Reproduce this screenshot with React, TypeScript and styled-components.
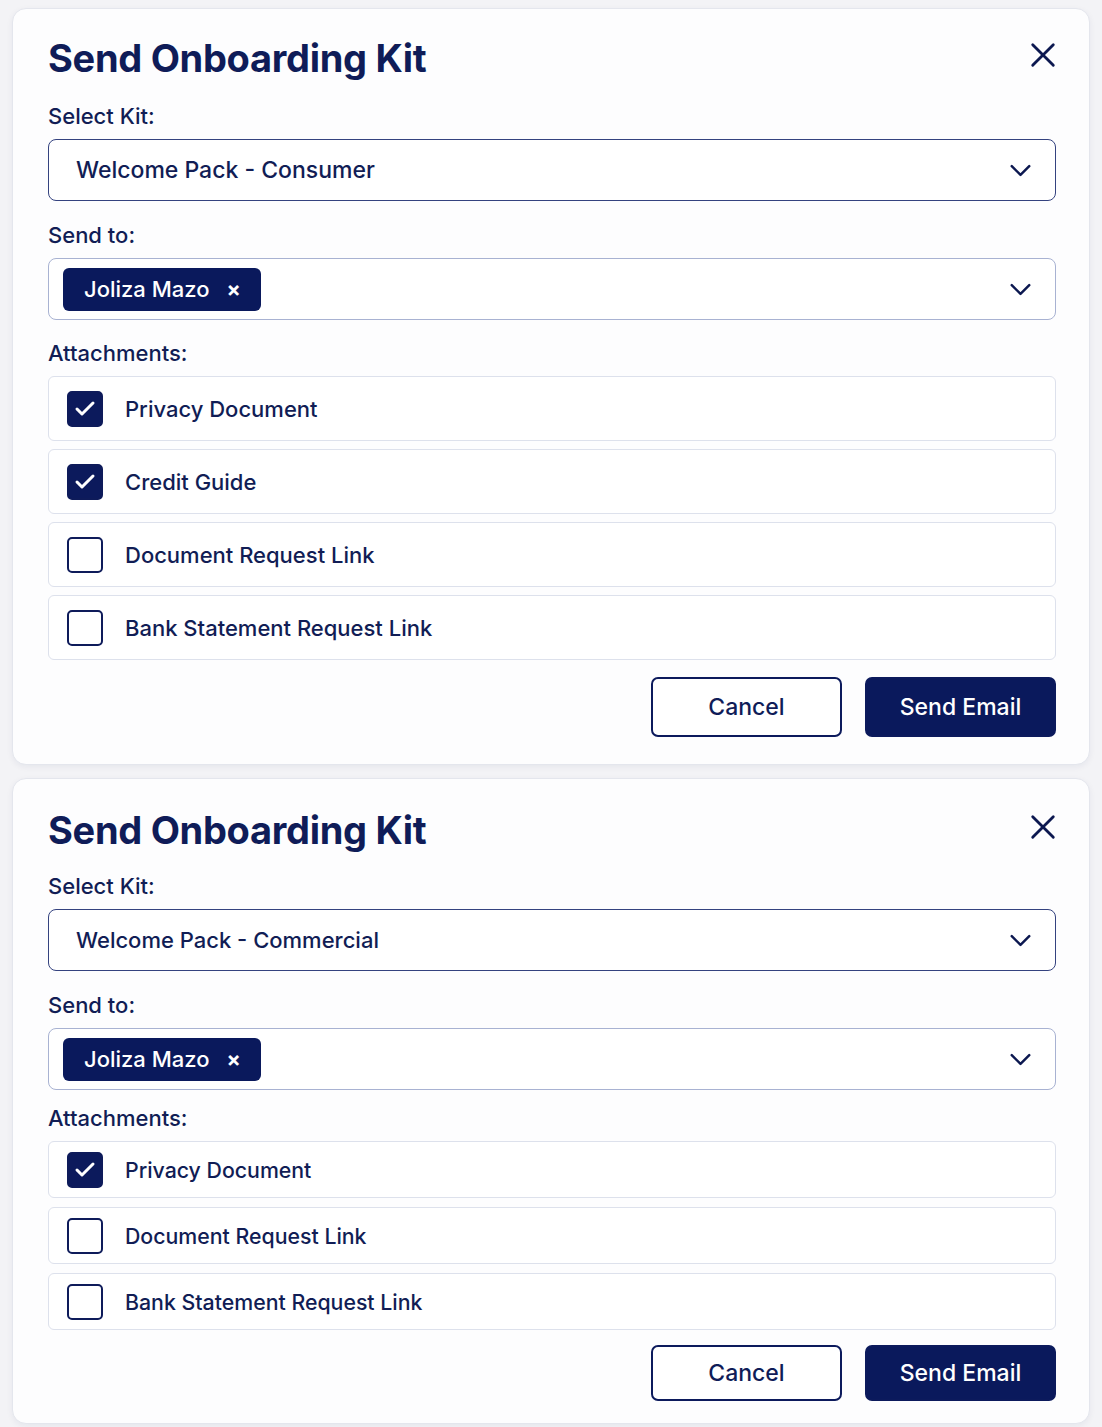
import styled, { createGlobalStyle } from "styled-components";
import { Check } from "lucide-react";

const GlobalStyle = createGlobalStyle`
  body {
    margin: 0;
    background: #f3f3f6;
    font-family: Inter, "Liberation Sans", sans-serif;
    color: #101d5a;
  }
`;

const Page = styled.div`
  display: flex;
  flex-direction: column;
  gap: 13px;
  padding: 8px 12px 4px 12px;
`;

const Card = styled.div<{ compact?: boolean }>`
  background: #fdfdfe;
  border: 1px solid #e4e6ed;
  border-radius: 14px;
  box-shadow: 0 2px 6px rgba(20, 30, 80, 0.06);
  padding: ${(p) => (p.compact ? "28px 33px 22px 35px" : "26px 33px 27px 35px")};
  display: flex;
  flex-direction: column;
`;

const Header = styled.div`
  display: flex;
  justify-content: space-between;
  align-items: center;
`;

const Title = styled.h2`
  margin: 0;
  font-size: 38px;
  line-height: 46px;
  font-weight: 700;
  letter-spacing: -0.3px;
  color: #0f1c58;
`;

const CloseButton = styled.button`
  border: none;
  background: none;
  padding: 0;
  display: flex;
  color: #0c1850;
  margin-top: -7px;
  cursor: pointer;
`;

const Label = styled.div<{ gap?: number }>`
  font-size: 22px;
  line-height: 26px;
  font-weight: 500;
  margin-top: ${(p) => p.gap ?? 21}px;
  margin-bottom: 10px;
  color: #111d55;
`;

const SelectBox = styled.div<{ strong?: boolean; compact?: boolean }>`
  height: 62px;
  box-sizing: border-box;
  border: 1.5px solid ${(p) => (p.strong ? "#34427f" : "#a8b2d2")};
  border-radius: 8px;
  display: flex;
  align-items: center;
  justify-content: space-between;
  padding: 0 24px 0 27px;
  font-size: ${(p) => (p.compact ? 22 : 23)}px;
  font-weight: 500;
  color: #111d55;
  background: #fff;
`;

const TagBox = styled(SelectBox)`
  padding-left: 14px;
`;

const Chip = styled.div`
  display: flex;
  align-items: center;
  gap: 17px;
  height: 43px;
  padding: 0 20px 0 21px;
  border-radius: 6px;
  background: #0a195c;
  color: #fff;
  font-size: 22px;
  font-weight: 500;
`;

const ChipClose = styled.span`
  font-size: 21px;
  font-weight: 700;
  line-height: 1;
`;

const RowList = styled.div<{ compact?: boolean }>`
  display: flex;
  flex-direction: column;
  gap: ${(p) => (p.compact ? 9 : 8)}px;
`;

const Row = styled.label<{ compact?: boolean }>`
  height: ${(p) => (p.compact ? 57 : 65)}px;
  box-sizing: border-box;
  border: 1px solid #dde1ec;
  border-radius: 6px;
  display: flex;
  align-items: center;
  gap: 22px;
  padding: 0 18px;
  font-size: ${(p) => (p.compact ? 21.3 : 22)}px;
  font-weight: 500;
  color: #111d55;
  background: #fff;
`;

const Box = styled.span<{ checked: boolean }>`
  width: 36px;
  height: 36px;
  box-sizing: border-box;
  border-radius: 5px;
  border: 2px solid #0e1b5a;
  background: ${(p) => (p.checked ? "#0c1a5c" : "#fff")};
  display: flex;
  align-items: center;
  justify-content: center;
  color: #fff;
`;

const Footer = styled.div<{ compact?: boolean }>`
  display: flex;
  justify-content: flex-end;
  gap: 23px;
  margin-top: ${(p) => (p.compact ? 15 : 17)}px;
`;

const Button = styled.button<{ primary?: boolean; compact?: boolean }>`
  width: 191px;
  height: ${(p) => (p.compact ? 56 : 60)}px;
  border-radius: 7px;
  border: 2px solid #0c1a5c;
  background: ${(p) => (p.primary ? "#0a195c" : "#fff")};
  color: ${(p) => (p.primary ? "#fff" : "#0f1c58")};
  font-family: inherit;
  font-size: 23px;
  font-weight: 500;
  cursor: pointer;
`;

function CloseIcon() {
  return (
    <svg width="26" height="26" viewBox="0 0 24 24" fill="none">
      <path
        d="M2.5 2.5 L21.5 21.5 M21.5 2.5 L2.5 21.5"
        stroke="currentColor"
        strokeWidth="2.6"
        strokeLinecap="round"
      />
    </svg>
  );
}

function Chevron() {
  return (
    <svg width="21" height="13" viewBox="0 0 24 14" fill="none">
      <polyline
        points="2,2 12,12 22,2"
        stroke="#0c1850"
        strokeWidth="2.8"
        strokeLinecap="round"
        strokeLinejoin="round"
      />
    </svg>
  );
}

interface KitProps {
  kit: string;
  items: { name: string; checked: boolean }[];
  compact?: boolean;
}

function KitCard({ kit, items, compact }: KitProps) {
  return (
    <Card compact={compact}>
      <Header>
        <Title>Send Onboarding Kit</Title>
        <CloseButton>
          <CloseIcon />
        </CloseButton>
      </Header>
      <Label gap={compact ? 20 : 22}>Select Kit:</Label>
      <SelectBox strong compact={compact}>
        <span>{kit}</span>
        <Chevron />
      </SelectBox>
      <Label>Send to:</Label>
      <TagBox>
        <Chip>
          Joliza Mazo <ChipClose>×</ChipClose>
        </Chip>
        <Chevron />
      </TagBox>
      <Label gap={compact ? 15 : 20}>Attachments:</Label>
      <RowList compact={compact}>
        {items.map((it) => (
          <Row key={it.name} compact={compact}>
            <Box checked={it.checked}>
              {it.checked && <Check size={24} strokeWidth={3} />}
            </Box>
            {it.name}
          </Row>
        ))}
      </RowList>
      <Footer compact={compact}>
        <Button compact={compact}>Cancel</Button>
        <Button primary compact={compact}>
          Send Email
        </Button>
      </Footer>
    </Card>
  );
}

export default function App() {
  return (
    <>
      <GlobalStyle />
      <Page>
        <KitCard
          kit="Welcome Pack - Consumer"
          items={[
            { name: "Privacy Document", checked: true },
            { name: "Credit Guide", checked: true },
            { name: "Document Request Link", checked: false },
            { name: "Bank Statement Request Link", checked: false },
          ]}
        />
        <KitCard
          compact
          kit="Welcome Pack - Commercial"
          items={[
            { name: "Privacy Document", checked: true },
            { name: "Document Request Link", checked: false },
            { name: "Bank Statement Request Link", checked: false },
          ]}
        />
      </Page>
    </>
  );
}
